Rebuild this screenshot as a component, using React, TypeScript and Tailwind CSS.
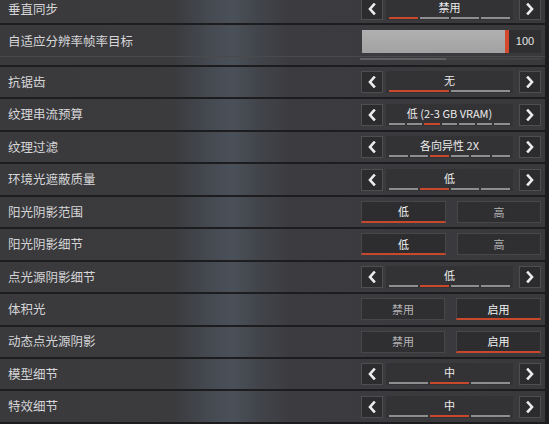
import React from "react";

type CycleRow = { kind: "cycle"; label: string; value: string; segs: number; active: number };
type ToggleRow = { kind: "toggle"; label: string; options: [string, string]; active: 0 | 1 };
type SliderRow = { kind: "slider"; label: string; value: number };
type Row = CycleRow | ToggleRow | SliderRow;

const rows: Row[] = [
  { kind: "cycle", label: "垂直同步", value: "禁用", segs: 4, active: 0 },
  { kind: "slider", label: "自适应分辨率帧率目标", value: 100 },
  { kind: "cycle", label: "抗锯齿", value: "无", segs: 2, active: 0 },
  { kind: "cycle", label: "纹理串流预算", value: "低 (2-3 GB VRAM)", segs: 7, active: 2 },
  { kind: "cycle", label: "纹理过滤", value: "各向异性 2X", segs: 6, active: 2 },
  { kind: "cycle", label: "环境光遮蔽质量", value: "低", segs: 4, active: 1 },
  { kind: "toggle", label: "阳光阴影范围", options: ["低", "高"], active: 0 },
  { kind: "toggle", label: "阳光阴影细节", options: ["低", "高"], active: 0 },
  { kind: "cycle", label: "点光源阴影细节", value: "低", segs: 4, active: 1 },
  { kind: "toggle", label: "体积光", options: ["禁用", "启用"], active: 1 },
  { kind: "toggle", label: "动态点光源阴影", options: ["禁用", "启用"], active: 1 },
  { kind: "cycle", label: "模型细节", value: "中", segs: 3, active: 1 },
  { kind: "cycle", label: "特效细节", value: "中", segs: 3, active: 1 },
];

const cjk = "font-['Noto_Sans_CJK_SC','Noto_Sans',sans-serif]";

function Chevron({ dir }: { dir: "left" | "right" }) {
  return (
    <svg width="10" height="12" viewBox="0 0 10 12" className="block">
      <polyline
        points={dir === "left" ? "7,1.5 3,6 7,10.5" : "3,1.5 7,6 3,10.5"}
        fill="none"
        stroke="#ececec"
        strokeWidth="2.6"
        strokeLinecap="square"
        strokeLinejoin="miter"
      />
    </svg>
  );
}

function ArrowBox({ dir }: { dir: "left" | "right" }) {
  return (
    <div className="w-[22px] h-[22px] shrink-0 flex items-center justify-center bg-[#2c2c2e] border border-[#4e4e50]">
      <Chevron dir={dir} />
    </div>
  );
}

function Cycle({ row }: { row: CycleRow }) {
  return (
    <div className="flex items-center h-[22px]">
      <ArrowBox dir="left" />
      <div className="ml-[3px] w-[127px] h-[22px] bg-[#333336] flex flex-col">
        <div className="flex-1 flex items-center justify-center text-[11px] leading-none text-[#ececec]">
          {row.value}
        </div>
        <div className="flex gap-[2px] px-[3px] pb-[1px]">
          {Array.from({ length: row.segs }).map((_, i) => (
            <div
              key={i}
              className={
                i === row.active ? "flex-1 h-[2px] bg-[#c9482c]" : "flex-1 h-[2px] bg-[#8e8e90]"
              }
            />
          ))}
        </div>
      </div>
      <div className="ml-[6px]">
        <ArrowBox dir="right" />
      </div>
    </div>
  );
}

function Toggle({ row }: { row: ToggleRow }) {
  return (
    <div className="flex gap-[11px] h-[22px]">
      {row.options.map((opt, i) => {
        const on = i === row.active;
        return (
          <div
            key={opt}
            className={
              on
                ? "w-[85px] h-[22px] flex items-center justify-center bg-[#2d2d2f] border border-[#47474a] border-b-2 border-b-[#c9482c] text-[11px] text-[#f2f2f2]"
                : "w-[84px] h-[22px] flex items-center justify-center bg-[#2f2f31] border border-[#47474a] text-[11px] text-[#b4b4b6]"
            }
          >
            {opt}
          </div>
        );
      })}
    </div>
  );
}

function Slider({ row }: { row: SliderRow }) {
  return (
    <div className="flex items-center h-[23px] ml-[1px] mt-[3px]">
      <div className="w-[147px] h-[23px] flex bg-[linear-gradient(180deg,#b0b0b0,#a2a2a2)]">
        <div className="flex-1" />
        <div className="w-[4px] bg-[#d2492e]" />
      </div>
      <div className="w-[32px] h-[23px] flex items-center justify-center bg-[#2f2f31] text-[11px] text-[#e4e4e4] font-['Liberation_Sans',sans-serif]">
        {row.value}
      </div>
    </div>
  );
}

function SettingRow({ row, first }: { row: Row; first: boolean }) {
  const isSlider = row.kind === "slider";
  const height = first ? "h-[30px] mt-[-5px] " : isSlider ? "h-[42px] " : "h-[32.45px] ";
  return (
    <div className={height + "shrink-0 flex flex-col border-b-2 border-[#1d1d1f]"}>
      <div className={(first ? "h-[28px] " : "h-[30.45px] ") + "shrink-0 flex items-center"}>
        <div className={(isSlider ? "mt-[2px] " : "") + "flex-1 pl-[8px] text-[12.5px] text-[#d6d6d8] leading-none"}>
          {row.label}
        </div>
        <div className="w-[180px] mr-[4px] flex items-center">
          {row.kind === "cycle" && <Cycle row={row} />}
          {row.kind === "toggle" && <Toggle row={row} />}
          {row.kind === "slider" && <Slider row={row} />}
        </div>
      </div>
      {isSlider && (
        <div className="flex flex-col mt-[1px]">
          <div className="h-[1px] bg-[#4a4a4d]" />
          <div className="flex mt-[1px]">
            <div className="flex-1" />
            <div className="w-[181px] mr-[4px] flex h-[2px]">
              <div className="w-[86px] bg-[#5e5e60]" />
              <div className="flex-1 bg-[#434346]" />
            </div>
          </div>
        </div>
      )}
    </div>
  );
}

export default function App() {
  return (
    <div className={"w-[549px] h-[424px] overflow-hidden flex " + cjk}>
      <div className="flex-1 flex flex-col bg-[linear-gradient(90deg,#3a3a3d_0%,#3b3b3e_32%,#41444a_36%,#484d55_40%,#4a5058_43%,#42454b_47%,#3c3c40_53%,#39393c_100%)]">
        {rows.map((r, i) => (
          <SettingRow key={r.label} row={r} first={i === 0} />
        ))}
      </div>
      <div className="w-[4px] bg-[#1c1c1e]" />
    </div>
  );
}
